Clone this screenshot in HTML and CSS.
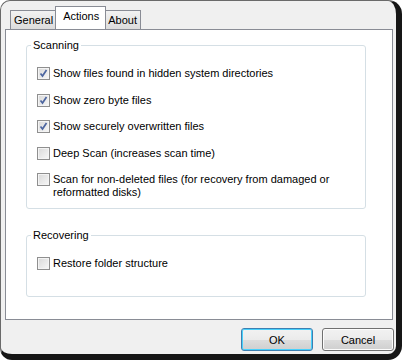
FILE: index.html
```html
<!DOCTYPE html>
<html lang="en">
<head>
  <meta charset="UTF-8">
  <title>Options</title>
  <link rel="stylesheet" href="styles.css">
</head>
<body>
  <div class="window">
    <div class="tabs">
      <div class="tab">General</div>
      <div class="tab active">Actions</div>
      <div class="tab">About</div>
    </div>
    <div class="panel">
      <fieldset class="group">
        <legend>Scanning</legend>
        <div class="row"><span class="check on"><svg viewBox="0 0 11 11"><path d="M2.5 5.5 L4.5 8 L8.5 2"/></svg></span><span class="text">Show files found in hidden system directories</span></div>
        <div class="row"><span class="check on"><svg viewBox="0 0 11 11"><path d="M2.5 5.5 L4.5 8 L8.5 2"/></svg></span><span class="text">Show zero byte files</span></div>
        <div class="row"><span class="check on"><svg viewBox="0 0 11 11"><path d="M2.5 5.5 L4.5 8 L8.5 2"/></svg></span><span class="text">Show securely overwritten files</span></div>
        <div class="row"><span class="check"></span><span class="text">Deep Scan (increases scan time)</span></div>
        <div class="row"><span class="check"></span><span class="text">Scan for non-deleted files (for recovery from damaged or<br>reformatted disks)</span></div>
      </fieldset>
      <fieldset class="group recover">
        <legend>Recovering</legend>
        <div class="row"><span class="check"></span><span class="text">Restore folder structure</span></div>
      </fieldset>
    </div>
    <div class="buttons">
      <button class="btn default">OK</button>
      <button class="btn">Cancel</button>
    </div>
  </div>
</body>
</html>
```

FILE: styles.css
```css
* { margin: 0; padding: 0; box-sizing: border-box; }
body {
  background: #fff;
  font-family: 'Liberation Sans', Arial, sans-serif;
  font-size: 11px;
  color: #000;
}
.window {
  width: 402px;
  height: 360px;
  background: #f0f0f0;
  border-left: 1px solid #6a6a6a;
  border-top: 1px solid #6a6a6a;
  border-right: 6px solid #161616;
  border-bottom: 6px solid #161616;
  border-radius: 10px 14px 14px 12px;
  display: flex;
  flex-direction: column;
}
/* tabs */
.tabs {
  display: flex;
  align-items: flex-end;
  height: 28px;
  padding-left: 9px;
}
.tab {
  height: 19px;
  padding: 3px 3px 0 3px;
  border: 1px solid #898c95;
  border-bottom: none;
  background: linear-gradient(#f2f2f2, #dcdcdc);
  margin-right: -1px;
}
.tab.active {
  height: 23px;
  padding: 3px 6px 0 7px;
  margin: 0 -2px 0 -1px;
  background: #fff;
  position: relative;
  z-index: 1;
}
.panel {
  margin: 0 3px 0 4px;
  height: 291px;
  background: #fff;
  border: 1px solid #898c95;
  padding: 9px 0 0 20px;
}
/* group boxes */
.group {
  width: 340px;
  border: 1px solid #d5dfe5;
  border-radius: 3px;
  padding: 15px 0 9px 10px;
}
.group legend {
  margin-left: -6px;
  padding: 0 2px;
  line-height: 13px;
}
.group.recover {
  margin-top: 20px;
  padding-bottom: 26px;
}
.row {
  display: flex;
  align-items: flex-start;
  gap: 3px;
  line-height: 13px;
}
.row + .row { margin-top: 13.5px; }
.check {
  flex: none;
  width: 13px;
  height: 13px;
  border: 1px solid #8f8f8f;
  background: linear-gradient(135deg, #d8d8d8, #f8f8f8);
  box-shadow: inset 0 0 0 1px #f4f4f4;
}
.check svg {
  display: block;
  width: 11px;
  height: 11px;
}
.check svg path {
  fill: none;
  stroke: #4d66a0;
  stroke-width: 1.7;
}
/* buttons */
.buttons {
  display: flex;
  justify-content: flex-end;
  gap: 9px;
  padding: 8px 2px 0 0;
}
.btn {
  width: 72px;
  height: 23px;
  font: inherit;
  border: 1px solid #707070;
  border-radius: 3px;
  background: linear-gradient(#f2f2f2 0%, #ebebeb 50%, #dddddd 51%, #cfcfcf 100%);
  box-shadow: inset 0 0 0 1px #fcfcfc;
}
.btn.default {
  border-color: #3c7fb1;
  box-shadow: inset 0 0 0 1px #48d0fb;
}
```
